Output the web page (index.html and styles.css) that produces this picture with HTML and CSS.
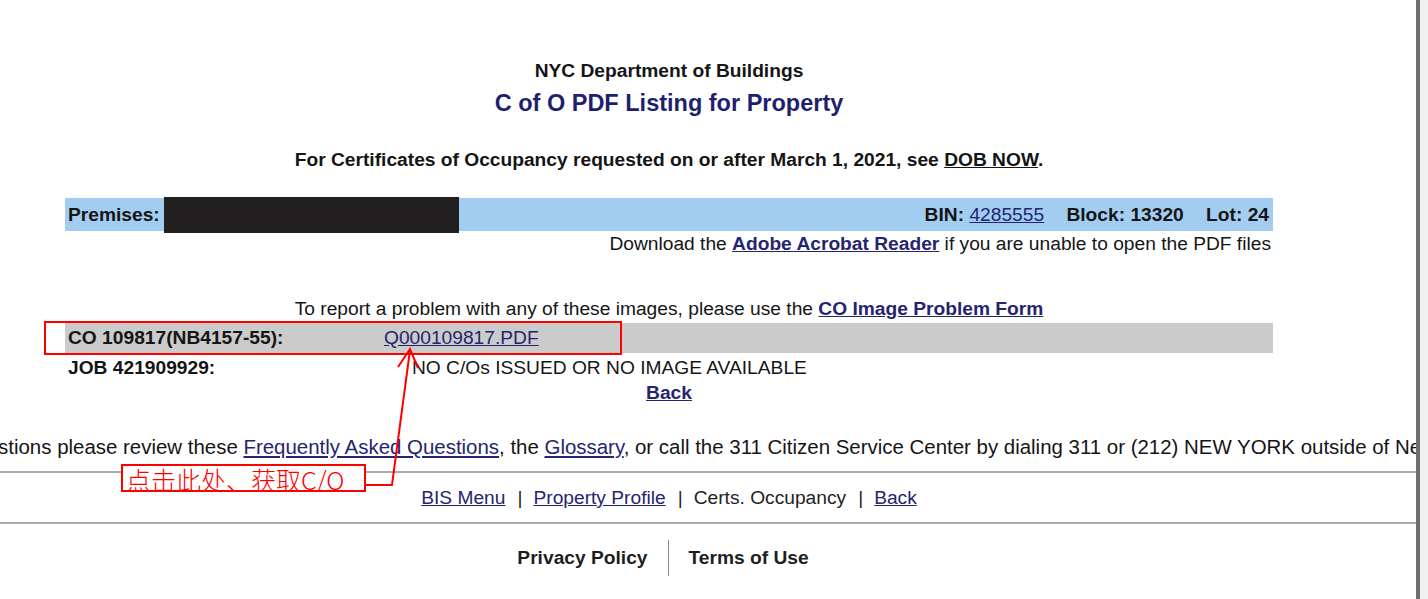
FILE: index.html
```html
<!DOCTYPE html>
<html lang="en">
<head>
<meta charset="utf-8">
<title>C of O PDF Listing for Property</title>
<link rel="stylesheet" href="styles.css">
</head>
<body>
<div class="window">
  <main class="viewport">
    <div class="col">
      <div class="agency">NYC Department of Buildings</div>
      <h1 class="title">C of O PDF Listing for Property</h1>
      <p class="notice">For Certificates of Occupancy requested on or after March 1, 2021, see <a class="plain-link" href="#">DOB NOW</a>.</p>

      <div class="premises">
        <div class="premises-left"><b>Premises:</b><span class="redact"></span></div>
        <div class="premises-right">
          <span class="grp"><b>BIN: </b><a class="link" href="#">4285555</a></span>
          <span class="grp"><b>Block: 13320</b></span>
          <span class="grp"><b>Lot: 24</b></span>
        </div>
      </div>
      <div class="download">Download the <a class="link bold" href="#">Adobe Acrobat Reader</a> if you are unable to open the PDF files</div>

      <div class="report">To report a problem with any of these images, please use the <a class="link bold" href="#">CO Image Problem Form</a></div>

      <div class="listing">
        <div class="row shaded">
          <div class="cell-label">CO 109817(NB4157-55):</div>
          <div class="cell-value"><a class="link" href="#">Q000109817.PDF</a></div>
        </div>
        <div class="row">
          <div class="cell-label">JOB 421909929:</div>
          <div class="cell-value message">NO C/Os ISSUED OR NO IMAGE AVAILABLE</div>
        </div>
      </div>
      <div class="back"><a class="link bold" href="#">Back</a></div>

      <div class="faq"><span>If you have any questions please review these <a class="link" href="#">Frequently Asked Questions</a>, the <a class="link" href="#">Glossary</a>, or call the 311 Citizen Service Center by dialing 311 or (212) NEW YORK outside of New York City.</span></div>
    </div>

    <hr class="rule rule-top">
    <div class="col nav">
      <a class="link" href="#">BIS Menu</a><span class="pipe">|</span><a class="link" href="#">Property Profile</a><span class="pipe">|</span><span>Certs. Occupancy</span><span class="pipe">|</span><a class="link" href="#">Back</a>
    </div>
    <hr class="rule rule-bottom">

    <div class="col footer">
      <a class="foot-link" href="#">Privacy Policy</a>
      <span class="foot-sep"></span>
      <a class="foot-link" href="#">Terms of Use</a>
    </div>

    <svg class="annotate" width="1416" height="599" viewBox="0 0 1416 599" aria-hidden="true">
      <rect x="45" y="322" width="576" height="32" fill="none" stroke="#ff0000" stroke-width="2"/>
      <polyline points="365,485 392,485 410,350" fill="none" stroke="#ff0000" stroke-width="2"/>
      <polyline points="398,367 410,349 418,368" fill="none" stroke="#ff0000" stroke-width="2"/>
    </svg>
    <div class="callout">点击此处、获取C/O</div>
  </main>
  <div class="scroll-edge"></div>
  <div class="scroll-track"></div>
</div>
</body>
</html>
```

FILE: styles.css
```css
html, body {
  margin: 0;
  padding: 0;
  background: #ffffff;
}

body {
  font-family: "Liberation Sans", Arial, sans-serif;
  font-size: 19.2px;
  line-height: 22px;
  color: #151515;
}

.window {
  display: flex;
  width: 1428px;
  height: 599px;
  overflow: hidden;
}

.viewport {
  position: relative;
  width: 1416px;
  flex: 0 0 1416px;
  overflow: hidden;
}

.scroll-edge {
  flex: 0 0 4px;
  background: #6e6e6e;
}

.scroll-track {
  flex: 0 0 8px;
  background: #efefef;
}

.col {
  width: 1338px;
  text-align: center;
}

.agency {
  padding-top: 60px;
  font-weight: bold;
}

.title {
  margin: 8px 0 0;
  font-size: 23.5px;
  line-height: 27px;
  font-weight: bold;
  color: #1f1f70;
}

.notice {
  margin: 32px 0 0;
  font-weight: bold;
}

.plain-link {
  color: #151515;
  text-decoration: underline;
}

.link {
  color: #25256f;
  text-decoration: underline;
}

.bold {
  font-weight: bold;
}

.premises {
  margin: 27px 0 0 65px;
  width: 1208px;
  height: 33px;
  background: #a3cdf0;
  display: flex;
  justify-content: space-between;
  align-items: center;
  padding: 0 4px 0 3px;
  box-sizing: border-box;
  text-align: left;
}

.premises-left {
  display: flex;
  align-items: center;
}

.redact {
  display: inline-block;
  width: 295px;
  height: 36px;
  margin-left: 4px;
  background: #221f20;
}

.grp + .grp {
  margin-left: 17px;
}

.download {
  margin: 2px 0 0 65px;
  width: 1206px;
  text-align: right;
}

.report {
  margin-top: 43px;
}

.listing {
  margin: 3px 0 0 65px;
  width: 1208px;
  text-align: left;
}

.row {
  display: flex;
  align-items: center;
  padding-left: 3px;
}

.row.shaded {
  height: 30px;
  background: #cbcbcb;
}

.row + .row {
  margin-top: 4px;
}

.cell-label {
  width: 316px;
  font-weight: bold;
}

.message {
  padding-left: 28px;
}

.back {
  margin-top: 3px;
}

.faq {
  margin-top: 32px;
  display: flex;
  justify-content: center;
  white-space: nowrap;
  font-size: 20.45px;
  padding-left: 8px;
  box-sizing: border-box;
}

.rule {
  border: 0;
  height: 2px;
  background: #ababab;
  margin: 0;
  width: 1416px;
}

.rule-top {
  margin-top: 13px;
}

.nav {
  margin-top: 14px;
  color: #222;
}

.pipe {
  margin: 0 11px 0 12px;
}

.rule-bottom {
  margin-top: 13px;
}

.footer {
  margin-top: 16px;
  display: flex;
  justify-content: center;
  align-items: center;
  height: 36px;
  padding-right: 12px;
  box-sizing: border-box;
}

.foot-link {
  color: #1e1e1e;
  font-weight: bold;
  text-decoration: none;
}

.foot-sep {
  width: 1px;
  height: 36px;
  background: #8c8c8c;
  margin: 0 20px;
}

.annotate {
  position: absolute;
  left: 0;
  top: 0;
  pointer-events: none;
}

.callout {
  position: absolute;
  left: 121px;
  top: 464px;
  width: 238px;
  height: 24px;
  padding: 0 0 0 3px;
  border: 2px solid #ff0000;
  background: #ffffff;
  color: #ff0000;
  font-family: "Noto Sans CJK SC", "Liberation Sans", sans-serif;
  font-size: 25px;
  line-height: 26px;
  font-weight: 300;
  white-space: nowrap;
  overflow: hidden;
}
```
